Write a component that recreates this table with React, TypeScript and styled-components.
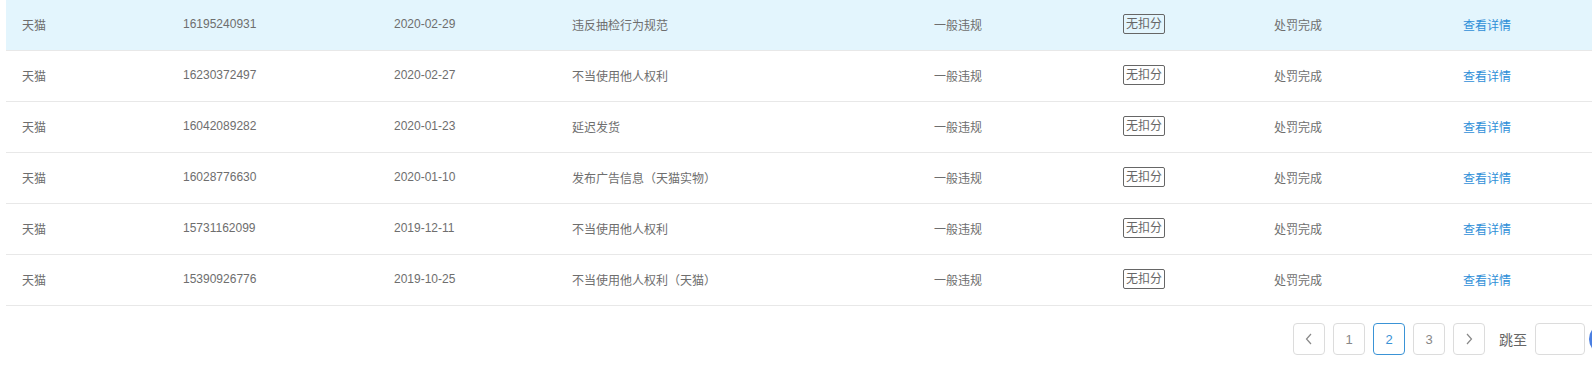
import React from 'react'
import styled, { createGlobalStyle } from 'styled-components'

type Record = {
  shop: string
  id: string
  date: string
  reason: string
  level: string
  score: string
  status: string
}

const records: Record[] = [
  { shop: '天猫', id: '16195240931', date: '2020-02-29', reason: '违反抽检行为规范', level: '一般违规', score: '无扣分', status: '处罚完成' },
  { shop: '天猫', id: '16230372497', date: '2020-02-27', reason: '不当使用他人权利', level: '一般违规', score: '无扣分', status: '处罚完成' },
  { shop: '天猫', id: '16042089282', date: '2020-01-23', reason: '延迟发货', level: '一般违规', score: '无扣分', status: '处罚完成' },
  { shop: '天猫', id: '16028776630', date: '2020-01-10', reason: '发布广告信息（天猫实物）', level: '一般违规', score: '无扣分', status: '处罚完成' },
  { shop: '天猫', id: '15731162099', date: '2019-12-11', reason: '不当使用他人权利', level: '一般违规', score: '无扣分', status: '处罚完成' },
  { shop: '天猫', id: '15390926776', date: '2019-10-25', reason: '不当使用他人权利（天猫）', level: '一般违规', score: '无扣分', status: '处罚完成' },
]

const GlobalStyle = createGlobalStyle`
  html, body {
    margin: 0;
    padding: 0;
    background: #fff;
    overflow: hidden;
  }
  body {
    font-family: "Liberation Sans", "Noto Sans CJK SC", sans-serif;
    color: #6e6e6e;
  }
`

const Page = styled.div`
  width: 1615px;
  padding-left: 6px;
`

const Table = styled.div`
  display: flex;
  flex-direction: column;
`

const Row = styled.div<{ $active?: boolean }>`
  display: grid;
  grid-template-columns: 161px 211px 178px 362px 189px 151px 189px 1fr;
  align-items: center;
  height: 51px;
  padding-bottom: 2px;
  box-sizing: border-box;
  border-bottom: 1px solid #e8e8e8;
  background: ${(p) => (p.$active ? '#e3f5fd' : '#fff')};
  font-size: 12px;
`

const Cell = styled.div`
  padding-left: 16px;
  white-space: nowrap;
`

const ScoreTag = styled.span`
  display: inline-block;
  border: 1px solid #666;
  border-radius: 2px;
  padding: 2px 2px 1px;
  line-height: 15px;
  color: #666;
`

const Link = styled.a`
  color: #2f8fd8;
  text-decoration: none;
  cursor: pointer;
`

const Pager = styled.div`
  display: flex;
  justify-content: flex-end;
  align-items: center;
  gap: 8px;
  margin-top: 17px;
`

const PageButton = styled.button<{ $active?: boolean }>`
  width: 32px;
  height: 32px;
  padding: 0;
  border: 1px solid ${(p) => (p.$active ? '#3a93d6' : '#dcdcdc')};
  border-radius: 4px;
  background: #fff;
  color: ${(p) => (p.$active ? '#3a93d6' : '#888')};
  font-family: "Liberation Sans", sans-serif;
  font-size: 13px;
  display: flex;
  align-items: center;
  justify-content: center;
`

const JumpLabel = styled.span`
  font-size: 14px;
  color: #666;
  margin-left: 6px;
  font-family: "Noto Sans CJK SC", sans-serif;
`

const JumpInput = styled.input`
  width: 50px;
  height: 32px;
  box-sizing: border-box;
  border: 1px solid #dcdcdc;
  border-radius: 4px;
`

const GoButton = styled.button`
  width: 32px;
  height: 32px;
  border: none;
  border-radius: 16px;
  background: #4a7fe2;
  margin-left: -4px;
`

const Chevron = ({ dir }: { dir: 'left' | 'right' }) => (
  <svg width="8" height="12" viewBox="0 0 8 12" fill="none" stroke="#888" strokeWidth="1.2">
    {dir === 'left' ? <path d="M6 1 L1.5 6 L6 11" /> : <path d="M2 1 L6.5 6 L2 11" />}
  </svg>
)

export default function App() {
  return (
    <Page>
      <GlobalStyle />
      <Table>
        {records.map((r, i) => (
          <Row key={r.id} $active={i === 0}>
            <Cell>{r.shop}</Cell>
            <Cell>{r.id}</Cell>
            <Cell>{r.date}</Cell>
            <Cell>{r.reason}</Cell>
            <Cell>{r.level}</Cell>
            <Cell>
              <ScoreTag>{r.score}</ScoreTag>
            </Cell>
            <Cell>{r.status}</Cell>
            <Cell>
              <Link>查看详情</Link>
            </Cell>
          </Row>
        ))}
      </Table>
      <Pager>
        <PageButton>
          <Chevron dir="left" />
        </PageButton>
        <PageButton>1</PageButton>
        <PageButton $active>2</PageButton>
        <PageButton>3</PageButton>
        <PageButton>
          <Chevron dir="right" />
        </PageButton>
        <JumpLabel>跳至</JumpLabel>
        <JumpInput />
        <GoButton />
      </Pager>
    </Page>
  )
}
